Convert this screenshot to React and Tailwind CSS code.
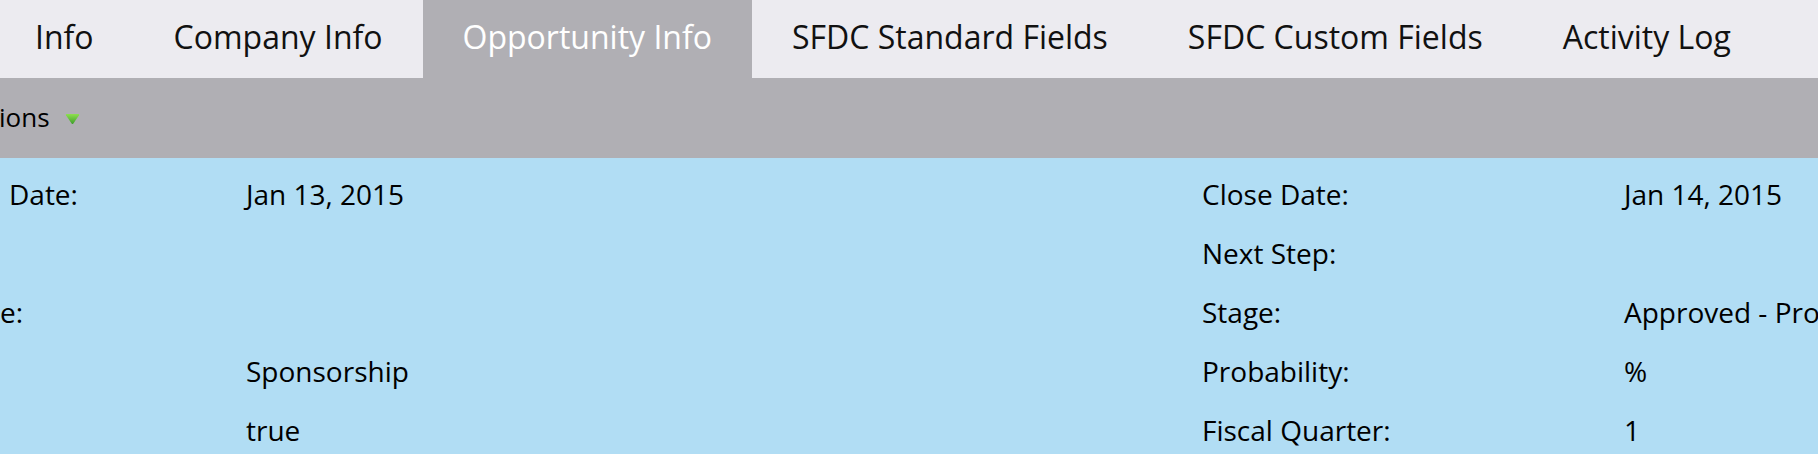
const TABS = [
  { id: 'info', label: 'Info' },
  { id: 'company', label: 'Company Info' },
  { id: 'opportunity', label: 'Opportunity Info' },
  { id: 'standard', label: 'SFDC Standard Fields' },
  { id: 'custom', label: 'SFDC Custom Fields' },
  { id: 'activity', label: 'Activity Log' },
]

const LEFT_ROWS = [
  { label: 'Date:', value: 'Jan 13, 2015', pad: 'pl-[9px]' },
  { label: '', value: '', pad: 'pl-[9px]' },
  { label: 'e:', value: '', pad: 'pl-0' },
  { label: '', value: 'Sponsorship', pad: 'pl-[9px]' },
  { label: '', value: 'true', pad: 'pl-[9px]' },
]

const RIGHT_ROWS = [
  { label: 'Close Date:', value: 'Jan 14, 2015' },
  { label: 'Next Step:', value: '' },
  { label: 'Stage:', value: 'Approved - Prospecting' },
  { label: 'Probability:', value: '%' },
  { label: 'Fiscal Quarter:', value: '1' },
]

function TriangleDown() {
  return (
    <svg width="15" height="12" viewBox="0 0 15 12" className="ml-[15px] mt-[1px]">
      <defs>
        <linearGradient id="tri" x1="0" y1="0" x2="0" y2="1">
          <stop offset="0%" stopColor="#8ee04f" />
          <stop offset="100%" stopColor="#3f9f2c" />
        </linearGradient>
      </defs>
      <path d="M1.6 1 L13.4 1 Q14.6 1 14 2.2 L8.4 10.4 Q7.5 11.6 6.6 10.4 L1 2.2 Q0.4 1 1.6 1 Z" fill="url(#tri)" />
    </svg>
  )
}

export default function App() {
  const active = 'opportunity'

  return (
    <div className="w-[1818px] h-[454px] overflow-hidden bg-[#b1ddf4] text-black font-['Open_Sans',sans-serif]">
      {/* Tabs */}
      <div className="flex h-[78px] bg-[#ecebf0] whitespace-nowrap">
        <div className="flex ml-[-5px]">
          {TABS.map(tab => (
            <div
              key={tab.id}
              className={`flex items-center px-[40px] pb-[5px] text-[32px] ${
                active === tab.id ? 'bg-[#b0afb4] text-white' : 'text-[#111]'
              }`}
            >
              {tab.label}
            </div>
          ))}
        </div>
      </div>

      {/* Actions bar */}
      <div className="flex items-center h-[80px] bg-[#b0afb4] whitespace-nowrap">
        <span className="text-[26px] ml-[-1px] pb-[2px]">ions</span>
        <TriangleDown />
      </div>

      {/* Fields */}
      <div className="flex pt-[6px] whitespace-nowrap text-[28px]">
        <div className="w-[1202px] shrink-0">
          {LEFT_ROWS.map((row, i) => (
            <div key={i} className="flex items-center h-[59px]">
              <div className={`w-[246px] shrink-0 ${row.pad}`}>{row.label}</div>
              <div>{row.value}</div>
            </div>
          ))}
        </div>
        <div className="shrink-0">
          {RIGHT_ROWS.map((row, i) => (
            <div key={i} className="flex items-center h-[59px]">
              <div className="w-[422px] shrink-0">{row.label}</div>
              <div>{row.value}</div>
            </div>
          ))}
        </div>
      </div>
    </div>
  )
}
